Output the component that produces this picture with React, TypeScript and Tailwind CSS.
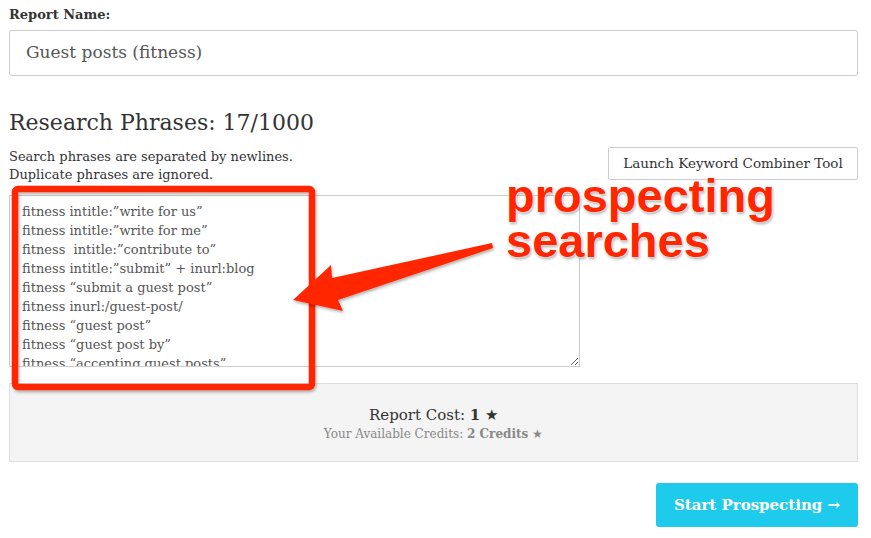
const PHRASES = [
  'fitness intitle:\u201dwrite for us\u201d',
  'fitness intitle:\u201dwrite for me\u201d',
  'fitness  intitle:\u201dcontribute to\u201d',
  'fitness intitle:\u201dsubmit\u201d + inurl:blog',
  'fitness \u201csubmit a guest post\u201d',
  'fitness inurl:/guest-post/',
  'fitness \u201cguest post\u201d',
  'fitness \u201cguest post by\u201d',
  'fitness \u201caccepting guest posts\u201d',
  'fitness \u201cguest post guidelines\u201d',
  'fitness \u201cguest author\u201d',
  'fitness \u201cguest blogger\u201d',
  'fitness \u201cbecome a contributor\u201d',
  'fitness \u201csubmit an article\u201d',
  'fitness \u201ccontributors wanted\u201d',
  'fitness \u201cbecome an author\u201d',
  'fitness \u201cguest column\u201d',
]

function Annotation() {
  return (
    <div className="pointer-events-none absolute inset-0">
      <svg width="871" height="538" className="absolute left-0 top-0">
        <defs>
          <filter id="sh" x="-10%" y="-10%" width="120%" height="120%">
            <feDropShadow dx="1" dy="2" stdDeviation="1.5" floodColor="#000" floodOpacity="0.3" />
          </filter>
        </defs>
        <rect
          x="15"
          y="189"
          width="297"
          height="198"
          rx="3"
          fill="none"
          stroke="#ff2600"
          strokeWidth="6.5"
          filter="url(#sh)"
        />
        <polygon
          points="293,300 331,265 332,278 492,243 493,248 338,300 343,311"
          fill="#ff2600"
          filter="url(#sh)"
        />
      </svg>
      {/* big callout label, one box per line so the boxes stay tight */}
      <div className="absolute left-[506px] top-[181px] font-['Liberation_Sans',sans-serif] text-[47px] font-bold leading-[30px] text-[#ff2600] [text-shadow:0_0_2px_#fff,0_0_2px_#fff,1px_2px_3px_rgba(0,0,0,0.35)]">
        prospecting
      </div>
      <div className="absolute left-[506px] top-[226px] font-['Liberation_Sans',sans-serif] text-[47px] font-bold leading-[30px] text-[#ff2600] [text-shadow:0_0_2px_#fff,0_0_2px_#fff,1px_2px_3px_rgba(0,0,0,0.35)]">
        searches
      </div>
    </div>
  )
}

export default function App() {
  return (
    <div className="relative h-[538px] w-[871px] overflow-hidden bg-white font-['DejaVu_Serif',serif] text-[#333]">
      <div className="pl-[9px] pr-[13px] pt-[6px]">
        <div className="text-[13px] font-bold leading-[18px] text-[#333]">Report Name:</div>
        <div className="mt-[6px] flex h-[46px] items-center rounded-[3px] border border-[#ccc] px-[16px] text-[17px] text-[#555]">
          Guest posts (fitness)
        </div>

        <h1 className="mt-[32px] text-[22px] leading-[30px] text-[#333]">Research Phrases: 17/1000</h1>

        <div className="mt-[9px] flex items-start justify-between">
          <div className="pt-[1px] text-[13px] leading-[18px]">
            <div>Search phrases are separated by newlines.</div>
            <div>Duplicate phrases are ignored.</div>
          </div>
          <button className="h-[33px] w-[250px] rounded-[2px] border border-[#ccc] bg-white text-[13.5px] text-[#333]">
            Launch Keyword Combiner Tool
          </button>
        </div>

        <textarea
          readOnly
          defaultValue={PHRASES.join('\n')}
          className="mt-[11px] block h-[172px] w-[571px] border border-[#ccc] px-[12px] pt-[6px] text-[13px] leading-[19px] text-[#555] outline-none [scrollbar-width:none]"
        />

        <div className="mt-[16px] flex h-[79px] flex-col items-center justify-center border border-[#ddd] bg-[#f4f4f4]">
          <div className="text-[15px] leading-[22px] text-[#333]">
            Report Cost: <span className="font-bold">1</span> ★
          </div>
          <div className="text-[12px] leading-[16px] text-[#888]">
            Your Available Credits: <span className="font-bold">2 Credits</span> ★
          </div>
        </div>

        <div className="mt-[21px] flex justify-end">
          <button className="h-[44px] w-[202px] rounded-[3px] bg-[#1fcbec] text-[15px] font-bold text-white">
            Start Prospecting →
          </button>
        </div>
      </div>
      <Annotation />
    </div>
  )
}
